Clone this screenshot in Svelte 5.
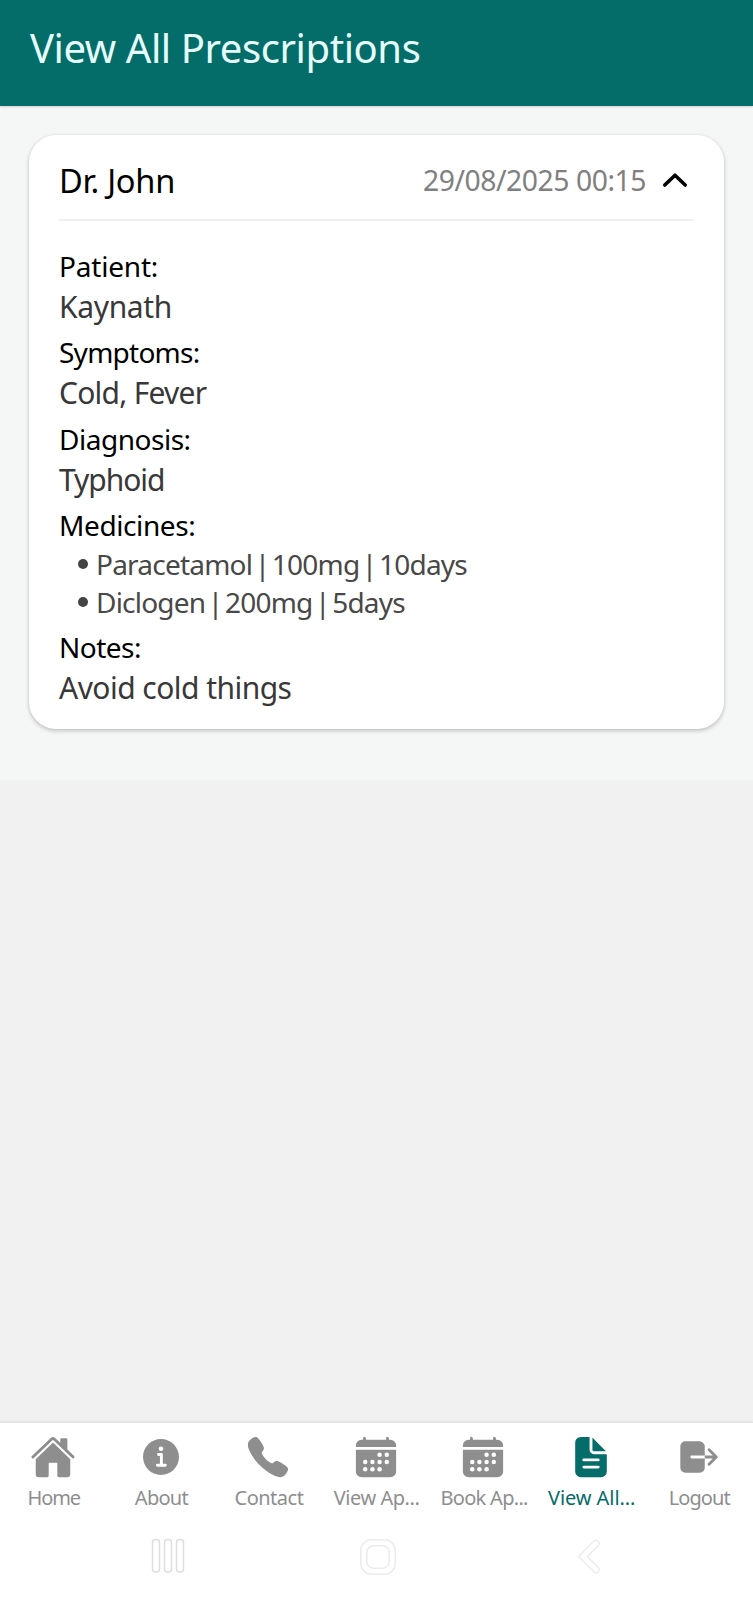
<script>
  const doctor = 'Dr. John';
  const issued = '29/08/2025 00:15';

  // `track` is the letter spacing in px
  const sections = [
    { label: 'Patient:', track: -0.2, value: 'Kaynath', valueTrack: -0.35 },
    { label: 'Symptoms:', track: -0.75, value: 'Cold, Fever', valueTrack: -0.75 },
    { label: 'Diagnosis:', track: -0.48, value: 'Typhoid', valueTrack: -1.04 },
    { label: 'Medicines:', track: -0.4, items: ['Paracetamol | 100mg | 10days', 'Diclogen | 200mg | 5days'] },
    { label: 'Notes:', track: -0.5, value: 'Avoid cold things', valueTrack: -0.54 }
  ];

  const tabs = [
    { icon: 'home', label: 'Home', track: -1.1 },
    { icon: 'info', label: 'About', track: -0.75 },
    { icon: 'call', label: 'Contact', track: -0.5 },
    { icon: 'calendar', label: 'View Ap...', track: -0.45 },
    { icon: 'calendar', label: 'Book Ap...', track: -0.7 },
    { icon: 'document', label: 'View All...', track: -0.08, active: true },
    { icon: 'logout', label: 'Logout', track: -0.95 }
  ];

  const dots = [[376, 232], [296, 232], [376, 312], [296, 312], [216, 312], [136, 312], [296, 392], [216, 392], [136, 392]];
</script>

<div class="screen">
  <header><h1>View All Prescriptions</h1></header>

  <main>
    <div class="list">
      <article class="card">
        <div class="card-head">
          <h2>{doctor}</h2>
          <time>{issued}</time>
          <svg class="chevron" viewBox="0 0 26 16"><path d="M2.8 13 13 3.2 23.2 13" /></svg>
        </div>
        <div class="card-body">
          {#each sections as s}
            <section>
              <h3 style:letter-spacing="{s.track}px">{s.label}</h3>
              {#if s.items}
                <ul>
                  {#each s.items as item}
                    <li><i></i>{item}</li>
                  {/each}
                </ul>
              {:else}
                <p style:letter-spacing="{s.valueTrack}px">{s.value}</p>
              {/if}
            </section>
          {/each}
        </div>
      </article>
    </div>
  </main>

  <nav class="tabs">
    {#each tabs as t}
      <div class="tab" class:active={t.active}>
        <svg viewBox="0 0 512 512">
          {#if t.icon === 'home'}
            <path d="M261.56 101.28a8 8 0 00-11.06 0L66.4 277.15a8 8 0 00-2.47 5.79L63.9 448a32 32 0 0032 32H192a16 16 0 0016-16V328a8 8 0 018-8h80a8 8 0 018 8v136a16 16 0 0016 16h96.06a32 32 0 0032-32V282.94a8 8 0 00-2.47-5.79z" />
            <path d="M490.91 244.15l-74.8-71.56V64a16 16 0 00-16-16h-48a16 16 0 00-16 16v32l-57.92-55.38C272.77 35.14 264.71 32 256 32c-8.68 0-16.72 3.14-22.14 8.63l-212.7 203.5c-6.22 6-7 15.87-1.34 22.37A16 16 0 0043 267.56L250.5 69.28a8 8 0 0111.06 0l207.52 198.28a16 16 0 0022.59-.44c6.14-6.36 5.63-16.86-.76-22.97z" />
          {:else if t.icon === 'info'}
            <path d="M256 56C145.72 56 56 145.72 56 256s89.72 200 200 200 200-89.72 200-200S366.28 56 256 56zm0 82a26 26 0 11-26 26 26 26 0 0126-26zm48 226h-88a16 16 0 010-32h28v-88h-16a16 16 0 010-32h32a16 16 0 0116 16v104h28a16 16 0 010 32z" />
          {:else if t.icon === 'call'}
            <path d="M391 480c-19.52 0-46.94-7.06-88-30-49.93-28-88.55-53.85-138.21-103.38C116.91 298.77 93.61 267.79 61 208.45c-36.84-67-30.56-102.12-23.54-117.13C45.82 73.38 58.16 62.65 74.11 52a176.3 176.3 0 0128.64-15.2c1-.43 1.93-.84 2.76-1.21 4.95-2.23 12.45-5.6 21.95-2 6.34 2.38 12 7.25 20.86 16 18.17 17.92 43 57.83 52.16 77.43 6.15 13.21 10.22 21.93 10.23 31.71 0 11.45-5.76 20.28-12.75 29.81-1.31 1.79-2.61 3.5-3.87 5.16-7.61 10-9.28 12.89-8.18 18.05 2.23 10.37 18.86 41.24 46.19 68.51s57.31 42.85 67.72 45.07c5.38 1.15 8.33-.59 18.65-8.47 1.48-1.13 3-2.3 4.59-3.47 10.66-7.93 19.08-13.54 30.26-13.54h.06c9.73 0 18.06 4.22 31.86 11.18 18 9.08 59.11 33.59 77.14 51.78 8.77 8.84 13.66 14.48 16.05 20.81 3.6 9.53.21 17-2 22-.37.83-.78 1.74-1.21 2.75a176.49 176.49 0 01-15.29 28.58c-10.63 15.9-21.4 28.21-39.38 36.58A67.42 67.42 0 01391 480z" />
          {:else if t.icon === 'calendar'}
            <path d="M480 128a64 64 0 00-64-64h-16V48.45c0-8.61-6.62-16-15.23-16.43A16 16 0 00368 48v16H144V48.45c0-8.61-6.62-16-15.23-16.43A16 16 0 00112 48v16H96a64 64 0 00-64 64v12a4 4 0 004 4h440a4 4 0 004-4zM32 416a64 64 0 0064 64h320a64 64 0 0064-64V179a3 3 0 00-3-3H35a3 3 0 00-3 3z" />
            {#each dots as [x, y]}<circle class="hole" cx={x} cy={y} r="25" />{/each}
          {:else if t.icon === 'document'}
            <path d="M428 224H288a48 48 0 01-48-48V36a4 4 0 00-4-4h-92a64 64 0 00-64 64v320a64 64 0 0064 64h224a64 64 0 0064-64V228a4 4 0 00-4-4zm-92 160H176a16 16 0 010-32h160a16 16 0 010 32zm0-80H176a16 16 0 010-32h160a16 16 0 010 32z" />
            <path d="M419.22 188.59L275.41 44.78a2 2 0 00-3.41 1.41V176a16 16 0 0016 16h129.81a2 2 0 001.41-3.41z" />
          {:else}
            <path d="M160 256a16 16 0 0116-16h144V136c0-32-33.79-56-64-56H104a56.06 56.06 0 00-56 56v240a56.06 56.06 0 0056 56h160a56.06 56.06 0 0056-56V272H176a16 16 0 01-16-16zM459.31 244.69l-80-80a16 16 0 00-22.62 22.62L409.37 240H320v32h89.37l-52.68 52.69a16 16 0 1022.62 22.62l80-80a16 16 0 000-22.62z" />
          {/if}
        </svg>
        <span style:letter-spacing="{t.track}px">{t.label}</span>
      </div>
    {/each}
  </nav>

  <div class="system">
    <svg class="recents" viewBox="0 0 34 36">
      <rect x="1.5" y="1.5" width="7" height="32.5" rx="3" />
      <rect x="13.5" y="1.5" width="7" height="32.5" rx="3" />
      <rect x="25.5" y="1.5" width="7" height="32.5" rx="3" />
    </svg>
    <svg class="home" viewBox="0 0 38 38">
      <rect x="1.8" y="1.8" width="34.4" height="34.4" rx="10.5" />
      <rect x="7.8" y="7.8" width="22.4" height="22.4" rx="6.5" />
    </svg>
    <svg class="back" viewBox="0 0 24 36">
      <path d="M1.5 17.5 17 2q2-1.5 4 0t.8 4L10.5 17.5l11.3 11.5q1.2 2-.8 4t-4 0z" />
    </svg>
  </div>
</div>

<style>
  :global(body) { margin: 0; }
  .screen {
    display: flex;
    flex-direction: column;
    width: 753px;
    height: 1600px;
    overflow: hidden;
    background: #f1f1f1;
    font-family: "Noto Sans", "Open Sans", sans-serif;
  }
  h1, h2, h3, p, ul { margin: 0; padding: 0; font-weight: 400; }
  header {
    z-index: 1;
    box-sizing: border-box;
    height: 106px;
    padding: 21px 30px 0;
    background: #046c69;
    box-shadow: 0 1px 2px rgba(0, 0, 0, .15);
  }
  h1 { font-size: 40px; line-height: 54px; letter-spacing: -.42px; color: #e6fffd; white-space: nowrap; }
  main { flex: 1; }
  .list { padding: 29px 29px 51px; background: #f4f7f6; }
  .card {
    box-sizing: border-box;
    height: 594px;
    padding: 0 30px;
    border-radius: 27px;
    background: #fff;
    box-shadow: 0 2px 4px rgba(0, 0, 0, .2), 0 0 3px rgba(0, 0, 0, .08);
  }
  .card-head {
    display: flex;
    align-items: center;
    box-sizing: border-box;
    height: 86px;
    padding-right: 6px;
    border-bottom: 2px solid #f0f0f0;
  }
  h2 { flex: 1; padding-top: 8px; font-size: 32.6px; line-height: 44px; letter-spacing: -.25px; color: #000; }
  time { padding-top: 6px; font-size: 28.3px; line-height: 40px; letter-spacing: -.45px; color: #808080; }
  .chevron { width: 26px; height: 16px; margin: 5px 0 0 16px; fill: none; stroke: #000; stroke-width: 3.6; stroke-linecap: round; stroke-linejoin: round; }
  .card-body { display: flex; flex-direction: column; gap: 6.3px; padding-top: 26px; white-space: nowrap; }
  h3 { font-size: 28px; line-height: 39px; color: #000; }
  p { font-size: 30px; line-height: 41px; color: #383838; }
  ul { padding: 0 0 1px 19px; list-style: none; }
  li {
    display: flex;
    align-items: center;
    font-size: 28px;
    line-height: 38px;
    letter-spacing: -.78px;
    word-spacing: -4px;
    color: #484848;
  }
  li i { width: 10px; height: 10px; margin: 1px 8px 0 0; border-radius: 50%; background: #444; }
  .tabs {
    display: flex;
    box-sizing: border-box;
    height: 95px;
    padding: 11px 0 0;
    border-top: 1px solid #e3e3e3;
    box-shadow: 0 -1px 2px rgba(0, 0, 0, .06);
    background: #fff;
  }
  .tab { flex: 1; display: flex; flex-direction: column; align-items: center; color: #8e8e8f; white-space: nowrap; }
  .tab svg { width: 46px; height: 46px; margin-left: -1.5px; fill: currentColor; }
  .tab .hole { fill: #fff; }
  .tab span { margin-top: 4px; font-size: 20px; line-height: 28px; }
  .active { color: #046c69; }
  .system {
    display: flex;
    align-items: flex-start;
    box-sizing: border-box;
    height: 83px;
    padding: 21px 0 0 151px;
    background: #fff;
  }
  .system svg { fill: none; stroke: #ececec; stroke-width: 1.5; }
  .system .recents { width: 34px; height: 36px; stroke: #dedede; }
  .home { width: 38px; height: 38px; margin-left: 174px; }
  .back { width: 24px; height: 36px; margin: 1px 0 0 180px; }
</style>
